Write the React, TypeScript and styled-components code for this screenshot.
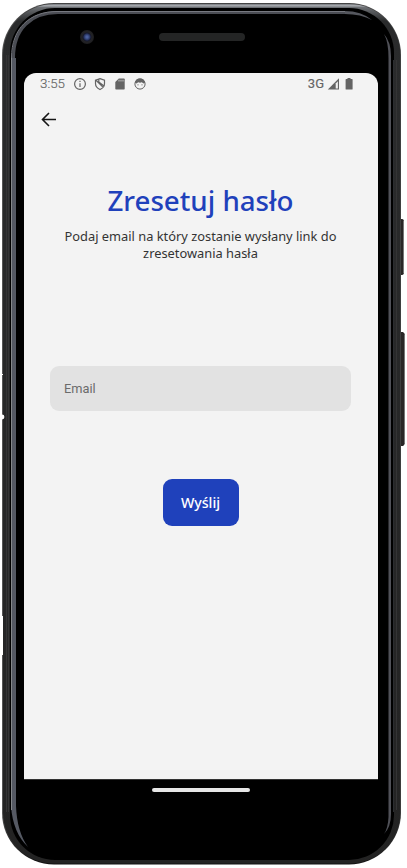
import React from "react";
import styled, { createGlobalStyle } from "styled-components";

const GlobalStyle = createGlobalStyle`
  * { box-sizing: border-box; }
  html, body { margin: 0; background: #fff; overflow: hidden; }
`;

const Device = styled.main`
  position: relative;
  width: 407px;
  height: 868px;
  padding: 14px 29px 0 24px;
  display: flex;
  flex-direction: column;
`;

const Chassis = styled.svg`
  position: absolute;
  inset: 0;
`;

const TopBezel = styled.div`
  position: relative;
  height: 59px;
  flex: none;
  display: flex;
  align-items: flex-start;
  padding: 16px 0 0 56px;
`;

const Camera = styled.span`
  width: 14px;
  height: 14px;
  border-radius: 50%;
  background: radial-gradient(circle at 50% 50%, #4a5f9c 0 1px, #27335f 3px, #15182a 4px, #232326 5px, #1d1d1f 7px);
`;

const Speaker = styled.span`
  width: 86px;
  height: 8px;
  margin: 3px 0 0 65px;
  border-radius: 4px;
  background: #242525;
`;

const Screen = styled.section`
  position: relative;
  height: 706px;
  flex: none;
  display: flex;
  flex-direction: column;
  align-items: center;
  background: #f3f3f3;
  border-radius: 12px 12px 0 0;
`;

const StatusBar = styled.header`
  width: 100%;
  height: 22px;
  flex: none;
  display: flex;
  align-items: center;
  padding: 0 24px 0 16px;
  color: #646464;
  font: 400 13px/22px Roboto, sans-serif;
`;

const Clock = styled.span`
  width: 33px;
  font-size: 13.3px;
  font-weight: 300;
  -webkit-text-stroke: 0.15px #646464;
`;

const Notifications = styled.div`
  display: flex;
  gap: 6px;
  flex: 1;
`;

const Network = styled.span`
  font-size: 13px;
  -webkit-text-stroke: 0.15px #646464;
  margin-right: 3px;
`;

const StatusIcon = styled.svg<{ $w?: number; $gap?: number }>`
  display: block;
  width: ${(p) => p.$w ?? 14}px;
  height: 14px;
  flex: none;
  margin-right: ${(p) => p.$gap ?? 0}px;
`;

const Toolbar = styled.nav`
  width: 100%;
  height: 50px;
  flex: none;
  display: flex;
  align-items: center;
  padding-left: 16px;
`;

const BackButton = styled.button`
  display: flex;
  padding: 0;
  border: 0;
  background: none;
`;

const Title = styled.h1`
  margin: 35px 1px 0 0;
  color: #1f41bb;
  font: 500 27.7px/40px "Noto Sans", sans-serif;
  white-space: nowrap;
`;

const Description = styled.p`
  width: 300px;
  margin: 8px 1px 0 0;
  color: #333;
  font: 400 12.85px/17px "Noto Sans", sans-serif;
  text-align: center;
`;

const EmailInput = styled.input`
  width: 301px;
  height: 45px;
  margin-top: 104px;
  margin-right: 1px;
  flex: none;
  padding: 0 14px;
  border: 0;
  border-radius: 9px;
  background: #e2e2e2;
  font: 400 12.8px Roboto, sans-serif;
  color: #333;
  &::placeholder { color: #6b6b6b; opacity: 1; }
`;

const SubmitButton = styled.button`
  width: 76px;
  height: 47px;
  margin: 68px 1px 0 0;
  flex: none;
  padding: 0;
  border: 0;
  border-radius: 9px;
  background: #1f41bb;
  color: #fff;
  font: 500 14.2px/47px "Noto Sans", sans-serif;
`;

const NavArea = styled.footer`
  position: relative;
  border-top: 1px solid #333;
  padding-top: 8px;
  display: flex;
  justify-content: center;
`;

const HomeIndicator = styled.span`
  width: 98px;
  height: 4px;
  margin-right: 1px;
  border-radius: 2px;
  background: #e6e6e6;
`;

function DeviceBody() {
  return (
    <Chassis width="407" height="868" viewBox="0 0 407 868" fill="none" aria-hidden="true">
      <defs>
        <linearGradient id="edge" x1="0" y1="3" x2="0" y2="864" gradientUnits="userSpaceOnUse">
          <stop offset="0" stopColor="#444" />
          <stop offset=".06" stopColor="#555" />
          <stop offset=".94" stopColor="#555" />
          <stop offset="1" stopColor="#111" />
        </linearGradient>
        <linearGradient id="band" x1="0" y1="4" x2="0" y2="864" gradientUnits="userSpaceOnUse">
          <stop offset="0" stopColor="#777a7e" />
          <stop offset=".002" stopColor="#a9acb1" />
          <stop offset=".004" stopColor="#6c6f73" />
          <stop offset=".02" stopColor="#2a2b2c" />
          <stop offset="1" stopColor="#232323" />
        </linearGradient>
      </defs>
      <path d="M400 219h2q2 0 2 3v50q0 3-2 3h-2zM400 332h3q2 1 2 4v105q0 4-2 5h-3z" fill="#292626" />
      <path d="M403.5 221v52M404.5 335v108" stroke="#777" />
      <rect x="2" y="3" width="399" height="861.5" rx="52" fill="url(#edge)" />
      <rect x="3" y="4" width="397.5" height="859.5" rx="51" fill="url(#band)" />
      <path d="M6.5 55v757M8.5 55v757" stroke="#343435" />
      <path d="M396.5 60v750" stroke="#343435" />
      <rect x="10" y="8" width="384" height="852" rx="45" fill="#000" />
      <path d="M13.5 60V58C13.5 29 31 12.500 58 12.500H345" stroke="#4b4d54" strokeWidth="3" />
      <path d="M11.5 58C11.5 28 30 11.500 57 11.500H345" stroke="#777980" />
      <path d="M345 11Q361 11 372 20Q361 14 345 14Z" fill="#55575e" />
      <path d="M11 58V806Q13 833 28 847Q17 832 16 806V58Z" fill="#555963" />
      <path d="M11.5 58V810" stroke="#85888b" />
      <path d="M384 34Q388.500 42 388.500 58V817Q388 828 384 834Q391 827 391 814V56Q391 42 384 34Z" fill="#505158" />
      <path d="M393.500 60V812" stroke="#2b2d30" />
      <path d="M2.500 616v39" stroke="#fff" />
      <circle cx="2" cy="417" r="2.400" fill="#fff" />
      <path d="M2 374.500h1" stroke="#fff" />
    </Chassis>
  );
}

export default function App() {
  return (
    <>
      <GlobalStyle />
      <Device>
        <DeviceBody />
        <TopBezel>
          <Camera />
          <Speaker />
        </TopBezel>
        <Screen>
          <StatusBar>
            <Clock>3:55</Clock>
            <Notifications>
              <StatusIcon viewBox="0 0 14 14" fill="none" stroke="#646464" strokeWidth="1.200">
                <circle cx="7" cy="7" r="5.400" />
                <path d="M7 6.200v3.900M7 3.800v1.300" />
              </StatusIcon>
              <StatusIcon viewBox="0 0 14 14" fill="none" stroke="#646464" strokeWidth="1.200">
                <path d="M7 1.600L11.500 3.200V6.500Q11.500 10.500 7 12.500Q2.500 10.500 2.500 6.500V3.200ZM3.300 3.500L10.200 10.400M5.800 2.300V5L11 9" />
              </StatusIcon>
              <StatusIcon viewBox="0 0 14 14">
                <path d="M5.800 1.500H11q.700 0 .7.700v9.600q0 .700-.7.700H3q-.7 0-.7-.7V5Z" fill="#646464" />
                <path d="M6 2.800v1.700M8 2.800v1.700M10 2.800v1.700" stroke="#ddd" strokeWidth=".8" />
              </StatusIcon>
              <StatusIcon viewBox="0 0 14 14">
                <circle cx="7" cy="7" r="5.100" fill="none" stroke="#646464" strokeWidth="1" />
                <path d="M2 5.800Q2.400 1.500 7 1.500T12 5.800L10.500 6.500 8.800 5.300Q7 6 5.200 5.300L3.500 6.500Z" fill="#646464" />
                <circle cx="5" cy="7.800" r=".6" fill="#646464" />
                <circle cx="9" cy="7.800" r=".6" fill="#646464" />
              </StatusIcon>
            </Notifications>
            <Network>3G</Network>
            <StatusIcon $gap={3} viewBox="0 0 14 14">
              <path d="M.8 12.500L12 1.300V12.500Z" fill="#646464" />
              <path d="M8.700 6.500L10.900 4.300V11.400H8.700Z" fill="#eee" />
            </StatusIcon>
            <StatusIcon $w={10} viewBox="0 0 10 14">
              <path d="M3.500 1h3v1H8q.6 0 .6.600V12q0 .6-.6.600H2.200q-.6 0-.6-.6V2.600q0-.6.600-.6h1.300Z" fill="#646464" />
            </StatusIcon>
          </StatusBar>
          <Toolbar>
            <BackButton aria-label="Wstecz">
              <svg width="18" height="18" viewBox="0 0 18 18" fill="none" stroke="#151515" strokeWidth="1.600">
                <path d="M16 8.500H3M9 2L2.500 8.500L9 15" />
              </svg>
            </BackButton>
          </Toolbar>
          <Title>Zresetuj hasło</Title>
          <Description>Podaj email na który zostanie wysłany link do zresetowania hasła</Description>
          <EmailInput type="email" placeholder="Email" />
          <SubmitButton>Wyślij</SubmitButton>
        </Screen>
        <NavArea>
          <HomeIndicator />
        </NavArea>
      </Device>
    </>
  );
}
